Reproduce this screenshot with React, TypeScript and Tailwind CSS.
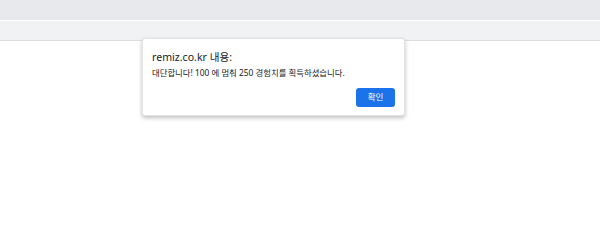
import React from 'react';

const App: React.FC = () => {
  return (
    <div className="relative w-[600px] h-[251px] bg-white overflow-hidden font-['Noto_Sans','Noto_Sans_CJK_KR',sans-serif]">
      {/* Browser chrome strips */}
      <div className="h-[20px] bg-[#e8e9ec]"></div>
      <div className="h-[1px] bg-white"></div>
      <div className="h-[20px] bg-[#f1f2f3] border-b border-[#dcdde0]"></div>

      {/* Alert dialog */}
      <div className="absolute left-[142px] top-[38px] w-[263px] h-[78px] bg-white rounded-[3px] border border-[#e2e3e5] shadow-[0_2px_4px_rgba(0,0,0,0.25)] px-[9px] pt-[10px]">
        <p className="text-[10.6px] leading-[16px] text-[#202124]">remiz.co.kr 내용:</p>
        <p className="mt-[2px] text-[8.4px] leading-[12px] text-[#202124]">
          대단합니다! 100 에 멈춰 250 경험치를 획득하셨습니다.
        </p>
        <div className="flex justify-end mt-[9px]">
          <button className="w-[39px] h-[19px] rounded-[3px] bg-[#1a73e8] text-white text-[8.5px] leading-none">
            확인
          </button>
        </div>
      </div>
    </div>
  );
};

export default App;
